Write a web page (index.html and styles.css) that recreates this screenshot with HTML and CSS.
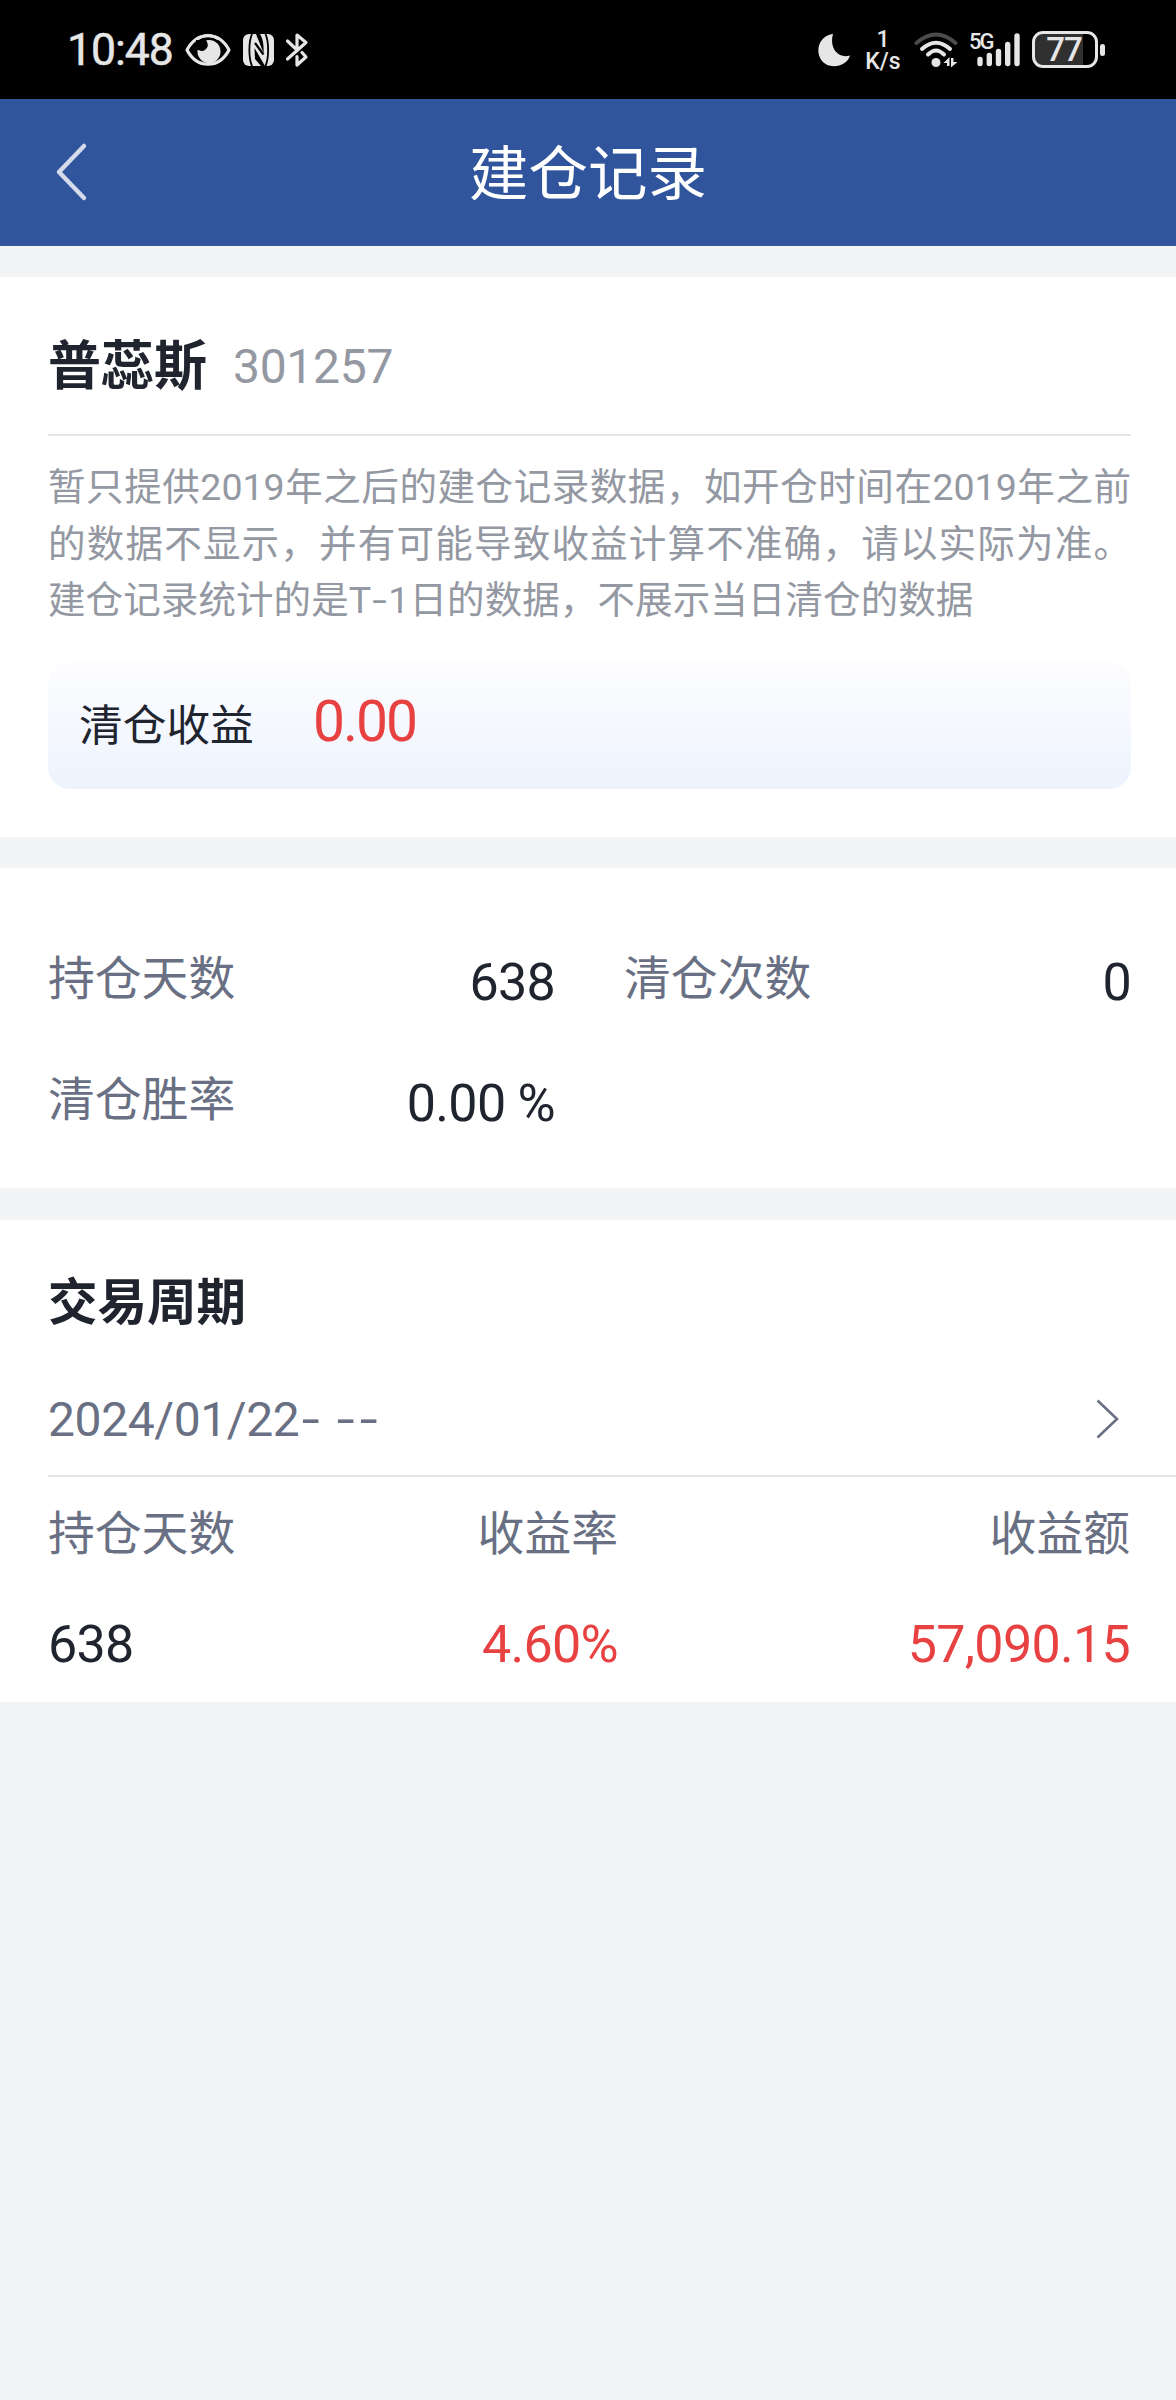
FILE: index.html
```
<!DOCTYPE html>
<html lang="zh-CN">
<head>
    <meta charset="UTF-8">
    <meta name="viewport" content="width=device-width, initial-scale=1.0">
    <title>建仓记录</title>
    <link rel="stylesheet" href="styles.css">
</head>
<body>
    <div class="statusBar">
        <div class="statusLeft">
            <span class="time">10:48</span>
            <svg class="eye" width="46" height="36" viewBox="0 0 46 36">
                <path d="M2 18C12-1 34-1 44 18C34 37 12 37 2 18Z" fill="none" stroke="#e6e6e6" stroke-width="3.2" stroke-linejoin="round"/>
                <circle cx="24" cy="19.500" r="11.500" fill="#e6e6e6"/>
                <path d="M11 8H21Q25 14 20 18Q17 20 13.500 18L11 18Z" fill="#000"/>
                <path d="M12 7Q23 0 34 7" fill="none" stroke="#e6e6e6" stroke-width="3.200"/>
            </svg>
            <svg class="nfc" width="31" height="32" viewBox="0 0 31 32">
                <rect width="31" height="32" rx="6" fill="#e6e6e6"/>
                <path d="M9 0C5.500 8 5.500 24 9 32M22.500 0C26 8 26 24 22.500 32" fill="none" stroke="#000" stroke-width="1.800"/>
                <path d="M13 0H17C20 5 21 12 20.500 19Z" fill="#000"/>
                <path d="M12 9L20.500 20.500" fill="none" stroke="#000" stroke-width="2.200"/>
                <path d="M11.500 14L22 32H18L12 25Z" fill="#000"/>
            </svg>
            <svg class="bluetooth" width="24" height="36" viewBox="0 0 24 36">
                <path d="M2.500 9L12 18V3L21 10.500L2.500 27M17 20.500L21 25L12 33V24.500" fill="none" stroke="#e6e6e6" stroke-width="3.200" stroke-linecap="round" stroke-linejoin="round"/>
            </svg>
        </div>
        <div class="statusRight">
            <svg class="moon" width="34" height="34" viewBox="0 0 34 34">
                <path d="M15 .800C-4 4-4 29 12 32.800C21 34.500 30 30 32 22.500C20 26 11 15 15 .800Z" fill="#e6e6e6"/>
            </svg>
            <div class="speed"><span>1</span><span>K/s</span></div>
            <svg class="wifi" width="46" height="36" viewBox="0 0 46 36">
                <g fill="none" stroke="#e6e6e6" stroke-width="4" stroke-linecap="round">
                    <path d="M2.500 11Q22 -6 41.500 11" stroke="#4b4b4b"/>
                    <path d="M8 17Q22 4.500 36 17"/>
                    <path d="M14 22.500Q22 14.500 30 22.500"/>
                </g>
                <circle cx="22" cy="30.500" r="4.500" fill="#e6e6e6"/>
                <path d="M29.500 31L35.500 25V34H33V31ZM37 26H39.500V30H43.500L37 35.500Z" fill="#e6e6e6"/>
            </svg>
            <div class="signal">
                <span class="network">5G</span>
                <svg width="44" height="36" viewBox="0 0 44 36">
                    <g stroke="#e6e6e6" stroke-width="5.400" stroke-linecap="round">
                        <path d="M3 27.500V31.500M12.300 23.500V31.500M21.500 19.500V31.500M30.700 12.500V31.500M40 4V31.500"/>
                    </g>
                </svg>
            </div>
            <div class="battery"><span>77</span></div>
            <i class="batteryTip"></i>
        </div>
    </div>

    <header>
        <svg class="back" width="36" height="60" viewBox="0 0 36 60">
            <path d="M32 4L7 30L32 56" fill="none" stroke="#d3dae9" stroke-width="4.500" stroke-linecap="round" stroke-linejoin="round"/>
        </svg>
        <h1>建仓记录</h1>
    </header>

    <section class="stock">
        <div class="stockName">
            <h2>普蕊斯</h2>
            <span>301257</span>
        </div>
        <p class="notice">
            <span class="full">暂只提供2019年之后的建仓记录数据，如开仓时间在2019年之前</span>
            <span class="full">的数据不显示，并有可能导致收益计算不准确，请以实际为准。</span>
            <span class="last">建仓记录统计的是T<i>-</i>1日的数据，不展示当日清仓的数据</span>
        </p>
        <div class="profit">
            <span>清仓收益</span>
            <b>0.00</b>
        </div>
    </section>

    <section class="stats">
        <div class="stat"><span>持仓天数</span><b>638</b></div>
        <div class="stat"><span>清仓次数</span><b>0</b></div>
        <div class="stat"><span>清仓胜率</span><b>0.00 %</b></div>
    </section>

    <section class="period">
        <h3>交易周期</h3>
        <div class="date">
            <span>2024/01/22<i>-</i> <i>-</i><i>-</i></span>
            <svg width="26" height="42" viewBox="0 0 26 42">
                <path d="M2.500 2.500L22 21L2.500 39.500" fill="none" stroke="#687083" stroke-width="2.600"/>
            </svg>
        </div>
        <div class="table">
            <span>持仓天数</span>
            <span>收益率</span>
            <span>收益额</span>
            <b>638</b>
            <b class="red">4.60%</b>
            <b class="red">57,090.15</b>
        </div>
    </section>
</body>
</html>
```
FILE: styles.css
```
*{
    box-sizing: border-box;
    margin: 0;
    padding: 0;
}
body{
    background: #f3f4f6;
    font-family: Roboto, 'Noto Sans CJK SC', sans-serif;
    color: #20242e;
}
svg{
    display: block;
    flex: none;
}
b, i{
    font-weight: 400;
    font-style: normal;
}

/* status bar */
.statusBar{
    height: 99px;
    padding: 0 71px 0 67px;
    display: flex;
    justify-content: space-between;
    background: #000;
    color: #e6e6e6;
}
.statusLeft, .statusRight{
    display: flex;
    align-items: center;
}
.time{
    width: 118px;
    padding-top: 2px;
    font-size: 44.5px;
    font-weight: 400;
    letter-spacing: -1px;
    line-height: 97px;
    -webkit-text-stroke: .5px #e6e6e6;
}
.nfc{
    margin-left: 12px;
}
.bluetooth{
    margin-left: 11px;
}
.speed{
    width: 40px;
    margin-left: 11px;
    padding-top: 2px;
    display: flex;
    flex-direction: column;
    align-items: center;
    font-size: 23px;
    font-weight: 500;
    line-height: 22px;
}
.wifi{
    margin-left: 11px;
}
.signal{
    position: relative;
    margin-left: 17px;
}
.network{
    position: absolute;
    left: -8px;
    top: -2px;
    font-size: 22px;
    font-weight: 500;
    letter-spacing: -2px;
    line-height: 24px;
}
.battery{
    width: 66px;
    height: 37px;
    margin-left: 11px;
    border: 3px solid #e6e6e6;
    border-radius: 11px;
    background: linear-gradient(90deg, #303030 48px, #000 48px);
    text-align: center;
    font-size: 33px;
    font-weight: 500;
    letter-spacing: -1px;
    line-height: 32px;
}
.battery span{
    margin-right: 2px;
}
.batteryTip{
    width: 5px;
    height: 12px;
    margin-left: 2px;
    border-radius: 3px;
    background: #e6e6e6;
}

/* title */
header{
    position: relative;
    height: 147px;
    display: flex;
    align-items: center;
    justify-content: center;
    background: #30559d;
    color: #fff;
}
.back{
    position: absolute;
    left: 52px;
    top: 43px;
}
h1{
    padding-top: 6px;
    font-size: 59.5px;
    font-weight: 400;
    line-height: 141px;
}

section{
    background: #fff;
}
.stock{
    height: 560px;
    margin-top: 31px;
    padding: 0 45px 0 48px;
}
.stockName{
    height: 159px;
    margin-bottom: 23px;
    padding: 31px 0 8px;
    display: flex;
    align-items: center;
    border-bottom: 2px solid #e5e5e7;
}
h2{
    width: 185px;
    font-size: 53px;
    font-weight: 700;
    line-height: 60px;
}
.stockName span{
    font-size: 48px;
    letter-spacing: -.3px;
    line-height: 60px;
    color: #9498a2;
}
.notice{
    font-size: 37.5px;
    line-height: 56.5px;
    color: #9498a2;
}
.notice span{
    display: block;
    white-space: nowrap;
}
.notice .full{
    text-align-last: justify;
}
.notice .last{
    letter-spacing: .1px;
}
.notice i{
    display: inline-block;
    width: 17px;
    text-align: center;
    transform: scaleX(1.4);
}
.profit{
    height: 127px;
    margin-top: 33px;
    padding: 0 0 7px 31px;
    display: flex;
    align-items: center;
    border-radius: 22px;
    background: linear-gradient(#fdfdff, #f5f8fe 50%, #edf3fd);
}
.profit span{
    width: 234px;
    font-size: 43.7px;
}
.profit b{
    font-size: 57px;
    letter-spacing: -2px;
    color: #e84141;
}

.stats{
    height: 320px;
    margin-top: 31px;
    padding: 51px 45px 0 48px;
    display: grid;
    grid-template-columns: 507px 507px;
    grid-auto-rows: 121px;
    column-gap: 69px;
}
.stat{
    display: flex;
    justify-content: space-between;
    line-height: 121px;
}
.stat span, .table span{
    font-size: 46.8px;
    color: #697083;
}
.stat b{
    padding-top: 3px;
    font-size: 52px;
    letter-spacing: -.7px;
}

.period{
    height: 482px;
    margin-top: 32px;
    padding-left: 48px;
}
h3{
    padding-top: 47px;
    font-size: 49.5px;
    font-weight: 700;
    line-height: 72px;
}
.date{
    height: 138px;
    padding: 24px 55px 0 0;
    display: flex;
    align-items: center;
    justify-content: space-between;
    border-bottom: 2px solid #e5e5e7;
    font-size: 48px;
    letter-spacing: -.4px;
    color: #697083;
}
.date i{
    display: inline-block;
    width: 23px;
    text-align: center;
    transform: scaleX(1.35);
}
.table{
    margin-right: 46px;
    display: grid;
    grid-template-columns: 285px 285px 1fr;
    grid-template-rows: 112px 112px;
    line-height: 114px;
    text-align: right;
}
.table span:nth-child(1), .table b:nth-child(4){
    text-align: left;
}
.table b{
    font-size: 52px;
    letter-spacing: -.7px;
    line-height: 112px;
}
.red{
    color: #e84141;
}
```
